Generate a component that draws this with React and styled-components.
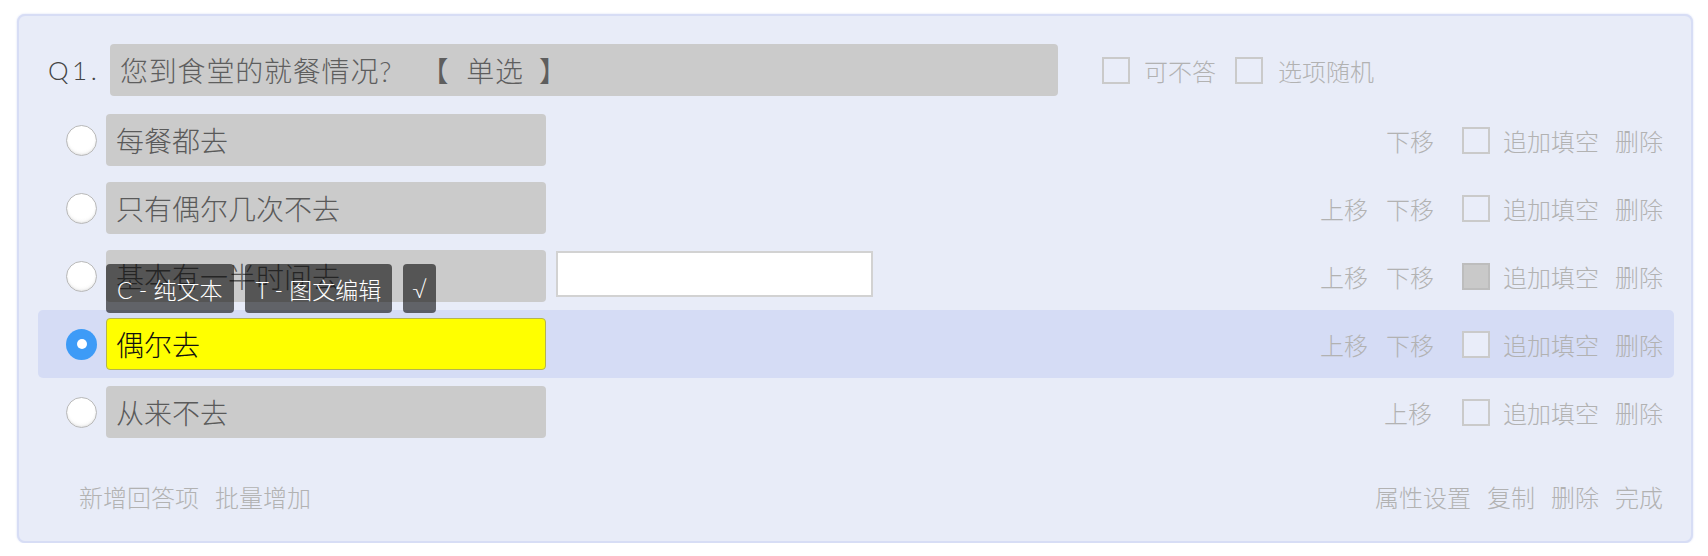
import React from "react";
import styled, { createGlobalStyle } from "styled-components";

const GlobalStyle = createGlobalStyle`
  html, body {
    margin: 0;
    padding: 0;
    background: #ffffff;
  }
  body {
    font-family: "Lato", "Noto Sans CJK SC", "Noto Sans", sans-serif;
    font-weight: 300;
  }
`

const Page = styled.div`
  padding: 14px 15px 0 17px;
`

const Card = styled.div`
  box-sizing: border-box;
  width: 1676px;
  border: 2px solid #d7ddf5;
  border-radius: 8px;
  background: #e8ecf8;
  box-shadow: 0 0 2px rgba(150, 168, 230, 0.45);
  padding: 28px 17px 28px 19px;
`

const TitleRow = styled.div`
  display: flex;
  align-items: center;
  height: 52px;
`

const QLabel = styled.span`
  margin-left: 10px;
  width: 62px;
  font-size: 26px;
  color: #444;
  letter-spacing: 3.5px;
`

const TitleBox = styled.div`
  box-sizing: border-box;
  width: 948px;
  height: 52px;
  border-radius: 4px;
  background: #cbcbcb;
  padding-left: 10px;
  display: flex;
  align-items: center;
  font-size: 28px;
  color: #5e5e5e;
  white-space: pre;
  letter-spacing: 0.8px;
  word-spacing: 20px;
`

const TypeTag = styled.span`
  padding: 0 15px 0 17px;
`

const HeadOptions = styled.div`
  display: flex;
  align-items: center;
  margin-left: 44px;
`

const Check = styled.span`
  box-sizing: border-box;
  display: inline-block;
  flex: none;
  width: 28px;
  height: 27px;
  border: 2px solid ${p => (p.$checked ? "#bdbdbd" : "#cacaca")};
  background: ${p => (p.$checked ? "#c9c9c9" : "#e9edf9")};
`

const Muted = styled.span`
  font-size: 24px;
  color: #b2b2b2;
  white-space: nowrap;
  margin-left: ${p => p.$gap || 0}px;
`

const Rows = styled.div`
  margin-top: 10px;
`

const Row = styled.div`
  box-sizing: border-box;
  height: 68px;
  display: flex;
  align-items: center;
  padding: 0 11px 0 28px;
  border-radius: 5px;
  background: ${p => (p.$active ? "#d5dcf5" : "transparent")};
`

const Radio = styled.span`
  box-sizing: border-box;
  flex: none;
  width: 31px;
  height: 31px;
  border-radius: 50%;
  display: flex;
  align-items: center;
  justify-content: center;
  ${p =>
    p.$on
      ? `background: #3d9bf7; border: none;`
      : `background: radial-gradient(circle at 50% 40%, #ffffff 55%, #eeeeee 100%);
         border: 1px solid #b9b9b9;
         box-shadow: inset 0 -1px 2px rgba(0,0,0,0.08);`}

  &::after {
    content: "";
    display: ${p => (p.$on ? "block" : "none")};
    width: 10px;
    height: 10px;
    border-radius: 50%;
    background: #fff;
  }
`

const OptionWrap = styled.div`
  position: relative;
  margin-left: 9px;
`

const OptionBox = styled.div`
  box-sizing: border-box;
  width: 440px;
  height: 52px;
  border-radius: 4px;
  padding-left: 10px;
  display: flex;
  align-items: center;
  font-size: 28px;
  white-space: nowrap;
  ${p =>
    p.$editing
      ? `background: #ffff00; border: 1px solid #b4b450; color: #111; padding-left: 9px;`
      : `background: #cbcbcb; color: #5a5a5a;`}
`

const Popup = styled.div`
  position: absolute;
  left: 0;
  top: 14px;
  display: flex;
  gap: 11px;
  z-index: 2;
`

const PopButton = styled.span`
  height: 49px;
  display: flex;
  align-items: center;
  padding: 0 ${p => (p.$narrow ? 9 : 11)}px;
  border-radius: 4px;
  background: rgba(0, 0, 0, 0.58);
  color: #fff;
  font-size: 23px;
  white-space: nowrap;
`

const FillInput = styled.div`
  box-sizing: border-box;
  width: 317px;
  height: 46px;
  margin-left: 10px;
  margin-bottom: 4px;
  background: #fff;
  border: 2px solid #d2d2d2;
`

const Actions = styled.div`
  margin-left: auto;
  display: flex;
  align-items: center;
`

const Footer = styled.div`
  display: flex;
  align-items: center;
  height: 34px;
  margin-top: 33px;
  padding: 0 11px 0 41px;
`

const FooterGroup = styled.div`
  display: flex;
  align-items: center;
  margin-left: ${p => (p.$right ? "auto" : "0")};
`

const options = [
  { text: "每餐都去", up: false, down: true },
  { text: "只有偶尔几次不去", up: true, down: true },
  { text: "基本有一半时间去", up: true, down: true, fill: true, popup: true },
  { text: "偶尔去", up: true, down: true, active: true },
  { text: "从来不去", up: true, down: false },
];

function OptionRow({ item }) {
  return (
    <Row $active={item.active}>
      <Radio $on={item.active} />
      <OptionWrap>
        <OptionBox $editing={item.active}>{item.text}</OptionBox>
        {item.popup && (
          <Popup>
            <PopButton>C - 纯文本</PopButton>
            <PopButton>T - 图文编辑</PopButton>
            <PopButton $narrow>√</PopButton>
          </Popup>
        )}
      </OptionWrap>
      {item.fill && <FillInput />}
      <Actions>
        {item.up && <Muted>上移</Muted>}
        {item.down && <Muted $gap={item.up ? 18 : 0}>下移</Muted>}
        <Check $checked={item.fill} style={{ marginLeft: item.down ? 28 : 30 }} />
        <Muted $gap={13}>追加填空</Muted>
        <Muted $gap={16}>删除</Muted>
      </Actions>
    </Row>
  );
}

export default function App() {
  return (
    <Page>
      <GlobalStyle />
      <Card>
        <TitleRow>
          <QLabel>Q1.</QLabel>
          <TitleBox>
            您到食堂的就餐情况? 【<TypeTag>单选</TypeTag>】
          </TitleBox>
          <HeadOptions>
            <Check />
            <Muted $gap={14}>可不答</Muted>
            <Check style={{ marginLeft: 19 }} />
            <Muted $gap={15}>选项随机</Muted>
          </HeadOptions>
        </TitleRow>
        <Rows>
          {options.map(o => (
            <OptionRow key={o.text} item={o} />
          ))}
        </Rows>
        <Footer>
          <FooterGroup>
            <Muted>新增回答项</Muted>
            <Muted $gap={16}>批量增加</Muted>
          </FooterGroup>
          <FooterGroup $right>
            <Muted>属性设置</Muted>
            <Muted $gap={16}>复制</Muted>
            <Muted $gap={16}>删除</Muted>
            <Muted $gap={16}>完成</Muted>
          </FooterGroup>
        </Footer>
      </Card>
    </Page>
  );
}
